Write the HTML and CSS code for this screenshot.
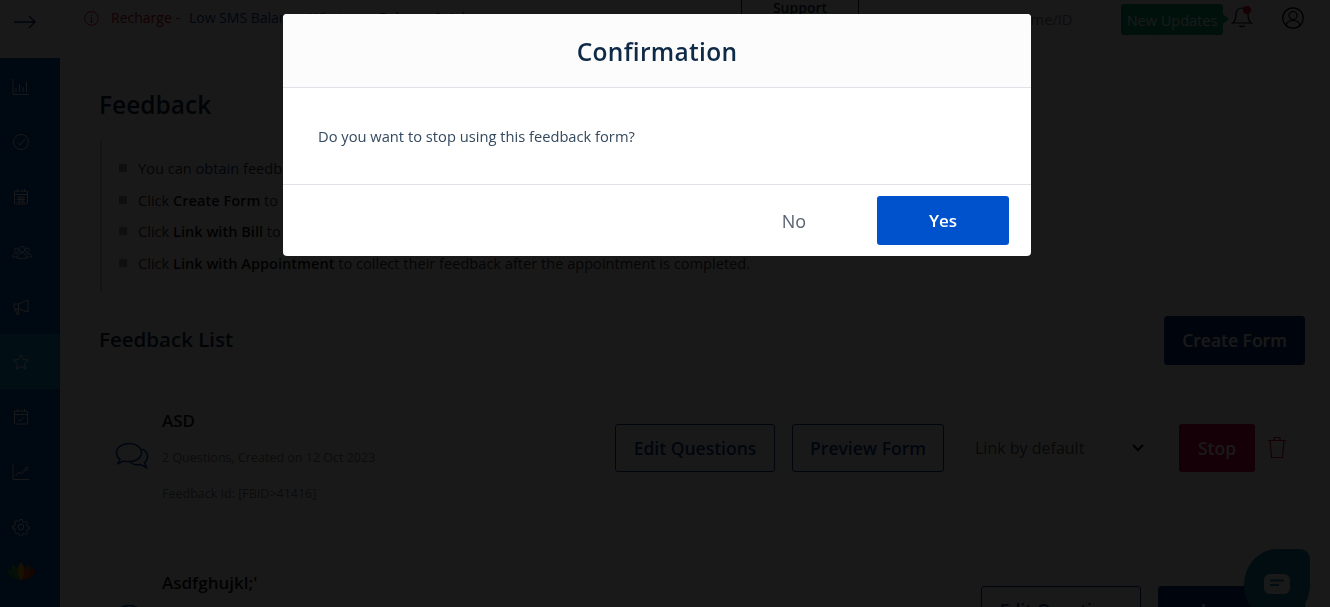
FILE: index.html
```html
<!DOCTYPE html>
<html lang="en">
<head>
    <meta charset="UTF-8">
    <meta name="viewport" content="width=device-width, initial-scale=1.0">
    <title>Feedback</title>
    <link rel="stylesheet" href="styles.css">
</head>
<body>

<header class="topbar">
    <div class="menu-toggle">
        <svg width="22" height="14" viewBox="0 0 22 14" fill="none" stroke="#002a80" stroke-width="1.4"><path d="M0 7h21M15 1l6 6-6 6"/></svg>
    </div>
    <div class="alert">
        <svg width="15" height="15" viewBox="0 0 15 15" fill="none" stroke="#d0021b" stroke-width="1"><circle cx="7.5" cy="7.5" r="6.8"/><path d="M7.5 6.5v4.5M6.3 11h2.4M6.5 6.5h1"/><circle cx="7.5" cy="4.2" r=".7" fill="#d0021b" stroke="none"/></svg>
        <span class="alert-red">Recharge -</span>
        <span class="alert-blue">Low SMS Balance, Whatsapp Balance &amp; Ads</span>
    </div>
    <button class="support-btn">Support</button>
    <div class="search">Search Customer Name/ID</div>
    <div class="updates">New Updates</div>
    <div class="bell">
        <svg width="22" height="24" viewBox="0 0 22 24" fill="none" stroke="#000" stroke-width="1.2"><path d="M11 3c-4 0-6 3-6 6.500 0 5-1.200 7-3.500 8.500h19c-2.300-1.500-3.500-3.500-3.500-8.500C17 6 15 3 11 3zM8.500 20.500c.5 1.500 4.500 1.500 5 0"/></svg>
        <span class="bell-dot"></span>
    </div>
    <div class="user">
        <svg width="22" height="22" viewBox="0 0 22 22" fill="none" stroke="#000" stroke-width="1.2"><circle cx="11" cy="11" r="10.2"/><circle cx="11" cy="8.5" r="4"/><path d="M4 18c1-3.500 4-4.500 7-4.500s6 1 7 4.500"/></svg>
    </div>
</header>

<div class="layout">
    <nav class="sidebar">
        <a class="nav-item"><svg viewBox="0 0 18 18"><path d="M1 1v15.500h16M4 14v-4M7.500 14V6M11 14v-5M14.500 14V4"/></svg></a>
        <a class="nav-item"><svg viewBox="0 0 18 18"><circle cx="9" cy="9" r="7.500"/><path d="M5.500 9.500l2.500 2.500 5-6"/></svg></a>
        <a class="nav-item"><svg viewBox="0 0 18 18"><rect x="2.500" y="3" width="13" height="13" rx="1"/><path d="M2.500 6.500h13M5.500 1v3M12.500 1v3M5 9h8M5 11.500h8M5 14h8M7.500 9v5M10.500 9v5"/></svg></a>
        <a class="nav-item nav-wide"><svg viewBox="0 0 22 16"><circle cx="11" cy="5" r="3.200"/><circle cx="5" cy="6" r="2.200"/><circle cx="17" cy="6" r="2.200"/><path d="M6 15c0-4 2-6 5-6s5 2 5 6zM6.500 10H3c-1.500 0-2.500 1.500-2.500 3.500h5M15.500 10H19c1.500 0 2.500 1.500 2.500 3.500h-5"/></svg></a>
        <a class="nav-item"><svg viewBox="0 0 18 18"><path d="M16 2v12L6.500 11H2V6h4.500zM6.500 6v5M3.500 11l1 5h2.500l-1-5"/></svg></a>
        <a class="nav-item active"><svg viewBox="0 0 18 18"><path d="M9 1.500l2.300 5 5.200.6-3.900 3.600 1.100 5.300L9 13.300 4.300 16l1.100-5.300L1.500 7.100l5.200-.6z"/></svg></a>
        <a class="nav-item"><svg viewBox="0 0 18 18"><rect x="2.500" y="3" width="13" height="13" rx="1"/><path d="M2.500 6.500h13M5.500 1v3M12.500 1v3M6 11l2.200 2.200 4-4"/></svg></a>
        <a class="nav-item"><svg viewBox="0 0 18 18"><path d="M1 1v15.500h16M3.500 13l3.500-4 2.500 2 4-4.500"/><circle cx="14.500" cy="5.500" r="1.500"/></svg></a>
        <a class="nav-item"><svg viewBox="0 0 18 18"><circle cx="9" cy="9" r="2.800"/><path d="M7.800 1.500h2.400l.4 2.200 1.500.7 1.900-1.200 1.700 1.700-1.200 1.900.7 1.500 2.200.4v2.400l-2.200.4-.7 1.500 1.200 1.900-1.700 1.700-1.900-1.200-1.500.7-.4 2.200H7.800l-.4-2.200-1.500-.7L4 15.700 2.300 14l1.200-1.900-.7-1.500-2.200-.4V7.800l2.200-.4.7-1.500L2.300 4 4 2.300l1.900 1.200 1.500-.7z"/></svg></a>
        <div class="logo">
            <svg width="30" height="18" viewBox="0 0 30 18"><path d="M0 7c6-1 12 3 15 11C7 18 2 14 0 7z" fill="#1f8a4c"/><path d="M30 7c-6-1-12 3-15 11 8 0 13-4 15-11z" fill="#d63a12"/><path d="M6 2c5 2 8 8 9 16-6-2-10-8-9-16z" fill="#2e9e4f"/><path d="M24 2c-5 2-8 8-9 16 6-2 10-8 9-16z" fill="#e0480f"/><path d="M15 0c4 4 5 11 0 18-5-7-4-14 0-18z" fill="#f0a010"/></svg>
        </div>
    </nav>

    <main class="content">
        <h1>Feedback</h1>

        <div class="notes">
            <ul>
                <li>You can <span class="accent">obtain</span> feedback from your customers on the services you provide.</li>
                <li>Click <b>Create Form</b> to build a new feedback form with your own questions.</li>
                <li>Click <b>Link with Bill</b> to collect their feedback after the bill is generated.</li>
                <li>Click <b>Link with Appointment</b> to collect their feedback after the appointment is completed.</li>
            </ul>
        </div>

        <div class="list-head">
            <h2>Feedback List</h2>
            <button class="btn btn-solid btn-create">Create Form</button>
        </div>

        <div class="form-row first-row">
            <div class="form-icon">
                <svg width="34" height="28" viewBox="0 0 34 28" fill="none" stroke="#0040a0" stroke-width="1.6"><path d="M14 1.500C7 1.500 1.500 5.500 1.500 11c0 3 1.500 5 3.500 6.500L3 21.500l6-2.500c1.500.4 3.200.6 5 .6 7 0 12.500-3.800 12.500-9S21 1.500 14 1.500z"/><path d="M27 7c3.500 1.500 5.500 4.500 5.500 7.500 0 2.500-1 4.500-3 6l2 5-6-3c-3.500.8-7.500 0-10-2"/></svg>
            </div>
            <div class="form-info">
                <div class="form-name">ASD</div>
                <div class="form-meta">2 Questions, Created on 12 Oct 2023</div>
                <div class="form-meta">Feedback Id: [FBID&gt;41416]</div>
            </div>
            <div class="form-actions">
                <button class="btn btn-outline btn-edit">Edit Questions</button>
                <button class="btn btn-outline btn-preview">Preview Form</button>
                <div class="link-select">
                    <span>Link by default</span>
                    <svg width="12" height="8" viewBox="0 0 12 8" fill="none" stroke="#000" stroke-width="2"><path d="M1 1l5 5 5-5"/></svg>
                </div>
                <button class="btn btn-stop">Stop</button>
                <svg class="trash" width="20" height="23" viewBox="0 0 20 23" fill="none" stroke="#d0021b" stroke-width="1.2"><path d="M1 4.500h18M3 4.500l1.500 17h11l1.500-17M7 4.500V1.500h6v3"/></svg>
            </div>
        </div>

        <div class="form-row">
            <div class="form-icon">
                <svg width="34" height="28" viewBox="0 0 34 28" fill="none" stroke="#0040a0" stroke-width="1.6"><path d="M14 1.500C7 1.500 1.500 5.500 1.500 11c0 3 1.500 5 3.500 6.500L3 21.500l6-2.500c1.500.4 3.200.6 5 .6 7 0 12.500-3.800 12.500-9S21 1.500 14 1.500z"/><path d="M27 7c3.500 1.500 5.500 4.500 5.500 7.500 0 2.500-1 4.500-3 6l2 5-6-3c-3.500.8-7.500 0-10-2"/></svg>
            </div>
            <div class="form-info">
                <div class="form-name">Asdfghujkl;'</div>
                <div class="form-meta">1 Question, Created on 12 Oct 2023</div>
                <div class="form-meta">Feedback Id: [FBID&gt;41417]</div>
            </div>
            <div class="form-actions">
                <button class="btn btn-outline btn-edit">Edit Questions</button>
                <button class="btn btn-solid btn-launch">Launch</button>
            </div>
        </div>
    </main>
</div>

<div class="chat-widget">
    <svg width="26" height="20" viewBox="0 0 26 20"><rect width="26" height="20" rx="6" fill="#fff"/><path d="M6 6.500h14M6 11h9" stroke="#0b86ad" stroke-width="2.2"/></svg>
</div>

<!-- Dimmed backdrop and confirmation dialog -->
<div class="overlay"></div>
<div class="modal">
    <div class="modal-header">Confirmation</div>
    <div class="modal-body">Do you want to stop using this feedback form?</div>
    <div class="modal-footer">
        <button class="modal-no">No</button>
        <button class="modal-yes">Yes</button>
    </div>
</div>

</body>
</html>
```

FILE: styles.css
```css
* {
    box-sizing: border-box;
}

html, body {
    height: 100%;
}

body {
    font-family: "Open Sans", "Noto Sans", sans-serif;
    background-color: #fff;
    color: #0f2a47;
    margin: 0;
    overflow: hidden;
}

button {
    font-family: inherit;
    cursor: pointer;
}

/* Top bar, scrolled a little out of view */
.topbar {
    height: 58px;
    display: flex;
    align-items: flex-start;
    overflow: hidden;
}

.menu-toggle {
    width: 64px;
    height: 32px;
    padding: 12px 0 0 14px;
    border-right: 1px solid #eee;
}

.alert {
    width: 677px;
    display: flex;
    align-items: center;
    gap: 4px;
    padding: 9px 0 0 20px;
    font-size: 14px;
    line-height: 18px;
    white-space: nowrap;
}

.alert svg {
    margin-right: 8px;
}

.alert-red {
    color: #d0021b;
}

.alert-blue {
    margin-left: 5px;
    color: #003a90;
}

.support-btn {
    width: 118px;
    height: 40px;
    margin-top: -21px;
    background: #fff;
    border: 1px solid #0f2a47;
    color: #0f2a47;
    font-size: 14px;
    font-weight: 600;
    padding: 18px 0 0;
    line-height: 20px;
}

.search {
    width: 278px;
    height: 41px;
    margin-left: 19px;
    padding: 9px 0 0 12px;
    font-size: 14.7px;
    line-height: 20px;
    color: #777;
    border-right: 1px solid #eee;
    border-bottom: 1px solid #eee;
}

.updates {
    width: 102px;
    height: 31px;
    margin: 4px 0 0 -35px;
    background-color: #00a870;
    border-radius: 3px;
    color: #fff;
    font-size: 14.5px;
    line-height: 33px;
    text-align: center;
    position: relative;
}

.updates::after {
    content: "";
    position: absolute;
    left: 100%;
    top: 10px;
    border-left: 6px solid #00a870;
    border-top: 5px solid transparent;
    border-bottom: 5px solid transparent;
}

.bell {
    margin: 5px 0 0 8px;
    width: 22px;
    position: relative;
}

.bell-dot {
    position: absolute;
    top: 1px;
    right: 2px;
    width: 8px;
    height: 8px;
    border-radius: 50%;
    background-color: #e60023;
}

.user {
    margin: 7px 0 0 29px;
}

/* Sidebar and content */
.layout {
    display: flex;
    height: calc(100vh - 58px);
}

.sidebar {
    width: 60px;
    flex-shrink: 0;
    background-color: #0050a8;
    padding-top: 1px;
}

.nav-item {
    height: 55px;
    display: flex;
    align-items: center;
    padding-left: 12px;
}

.nav-item svg {
    width: 18px;
    height: 18px;
    fill: none;
    stroke: #fff;
    stroke-width: 1;
}

.nav-wide svg {
    width: 20px;
}

.nav-item.active {
    background-color: #0a8ac8;
}

.logo {
    margin-top: 8px;
    padding-left: 6px;
}

.content {
    flex: 1;
    padding: 30px 25px 0 39px;
}

h1 {
    margin: 0;
    font-size: 24.5px;
    line-height: 34px;
    font-weight: 600;
    color: #0f2a47;
}

.notes {
    margin: 16px 0 0 1px;
    padding: 14px 0 13px 17px;
    border-left: 2px solid #ccc;
    border-radius: 4px;
}

.notes ul {
    list-style: none;
    margin: 0;
    padding: 0;
}

.notes li {
    position: relative;
    height: 31.7px;
    line-height: 32px;
    padding-left: 19px;
    font-size: 14.6px;
    color: #333;
    white-space: nowrap;
}

.notes li::before {
    content: "";
    position: absolute;
    left: 0;
    top: 12px;
    width: 8px;
    height: 8px;
    background-color: #999;
}

.notes b {
    font-weight: 600;
    color: #111;
}

.accent {
    color: #0f3a78;
}

.list-head {
    margin-top: 24px;
    display: flex;
    align-items: center;
    justify-content: space-between;
}

h2 {
    margin: 0 0 2px;
    font-size: 20.5px;
    font-weight: 600;
    color: #0f2a47;
}

.btn {
    height: 48px;
    padding: 0;
    border-radius: 3px;
    font-size: 17.5px;
    font-weight: 600;
}

.btn-solid {
    background-color: #003a80;
    border: 1px solid #003a80;
    color: #fff;
}

.btn-create {
    width: 141px;
    height: 49px;
}

.btn-launch {
    width: 147px;
}

.btn-outline {
    background-color: #fff;
    border: 1px solid #0a3a90;
    color: #0a3a90;
}

.btn-edit {
    width: 160px;
}

.btn-preview {
    width: 152px;
}

.btn-stop {
    width: 76px;
    margin-left: 8px;
    background-color: #e0004a;
    border: none;
    color: #fff;
}

.form-row {
    display: flex;
    align-items: center;
    padding-bottom: 14px;
    margin-top: 40px;
}

.first-row {
    border-bottom: 1px solid #f2f2f2;
}

.form-icon {
    width: 63px;
    padding-left: 16px;
    flex-shrink: 0;
}

.form-info {
    flex: 1;
    white-space: nowrap;
}

.form-name {
    font-size: 17px;
    line-height: 32px;
    margin-bottom: 3px;
    font-weight: 600;
    color: #111;
}

.form-meta {
    font-size: 12.5px;
    line-height: 36px;
    color: #777;
}

.form-actions {
    align-self: flex-start;
    margin-top: 19px;
    display: flex;
    gap: 17px;
}

.link-select {
    width: 196px;
    height: 48px;
    margin-left: -3px;
    padding: 0 9px 0 16px;
    display: flex;
    align-items: center;
    justify-content: space-between;
    border: 1px solid #f0f0f0;
    font-size: 16px;
    color: #555;
}

.trash {
    margin: 12px 18px 0 -5px;
}

.chat-widget {
    position: fixed;
    left: 1244px;
    top: 549px;
    width: 66px;
    height: 72px;
    padding: 25px 0 0 20px;
    background-color: #0b86ad;
    border-radius: 50% 10px 50% 50%;
}

.overlay {
    position: fixed;
    inset: 0;
    background-color: rgba(0, 0, 0, 0.9);
}

.modal {
    position: fixed;
    left: 283px;
    top: 14px;
    width: 748px;
    height: 242px;
    background-color: #fff;
    border-radius: 4px;
    display: flex;
    flex-direction: column;
    overflow: hidden;
}

.modal-header {
    height: 74px;
    padding-top: 1px;
    background-color: #fcfcfd;
    border-bottom: 1px solid #dfe3e8;
    font-size: 24.5px;
    line-height: 74px;
    font-weight: 600;
    letter-spacing: 0.3px;
    text-align: center;
    color: #0f2a47;
}

.modal-body {
    height: 97px;
    padding: 0 35px;
    border-bottom: 1px solid #dfe3e8;
    font-size: 14.7px;
    line-height: 97px;
    color: #34495e;
}

.modal-footer {
    flex: 1;
    display: flex;
    justify-content: flex-end;
    padding: 11px 22px 0 0;
}

.modal-no {
    width: 132px;
    height: 49px;
    margin-right: 17px;
    background: none;
    border: none;
    font-size: 18px;
    font-weight: 500;
    color: #5a6272;
}

.modal-yes {
    width: 132px;
    height: 49px;
    background-color: #0052cc;
    border: none;
    border-radius: 3px;
    color: #fff;
    font-size: 17px;
    font-weight: 600;
}
```
